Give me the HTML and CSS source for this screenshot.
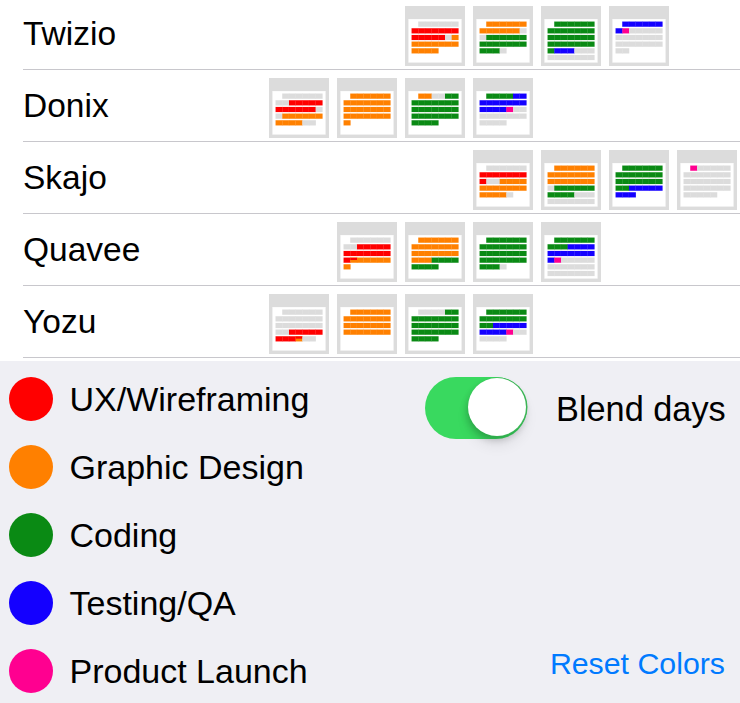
FILE: index.html

```html
<!DOCTYPE html>
<html lang="en">
<head>
  <meta charset="UTF-8" />
  <title>Projects</title>
  <link rel="stylesheet" href="styles.css">
</head>
<body>
  <div id="schedule">
    <div class="project">
      <div class="name">Twizio</div>
      <div class="weeks offset-3">
        <svg class="thumb" data-cells=".gggggg/rrrrrrr/rrrrrgo/ooooooo/oooo"></svg>
        <svg class="thumb" data-cells=".oooooo/oooooog/gGGGGGG/GGGGGGG/GGGg"></svg>
        <svg class="thumb" data-cells=".GGGGGG/GGGGGGG/GGGGGGG/GGGGGGG/Gbbbggg/ggggggg"></svg>
        <svg class="thumb" data-cells=".bbbbbb/bpggggg/ggggggg/ggggggg/gg"></svg>
      </div>
    </div>
    <div class="project">
      <div class="name">Donix</div>
      <div class="weeks">
        <svg class="thumb" data-cells=".gggggg/ggrrrrr/rrrrrrg/goooooo/oooogg"></svg>
        <svg class="thumb" data-cells=".oooooo/ooooooo/ooooooo/ooooooo/o"></svg>
        <svg class="thumb" data-cells=".ooggGG/GGGGGGG/GGGGGGG/GGGGGGG/GGGG"></svg>
        <svg class="thumb" data-cells=".GGGGbb/bbbbbbb/bbbbpgg/ggggggg/gggg"></svg>
      </div>
    </div>
    <div class="project">
      <div class="name">Skajo</div>
      <div class="weeks offset-4">
        <svg class="thumb" data-cells=".gggggg/rrrrrrr/rggoooo/ooooooo/oooog"></svg>
        <svg class="thumb" data-cells=".oooooo/ooooooo/ooooooo/gGGGGGG/GGGGggg/ggggggg"></svg>
        <svg class="thumb" data-cells=".GGGGGG/GGGGGGG/GGGGGGG/GGbbbbb/bbb"></svg>
        <svg class="thumb" data-cells=".pggggg/ggggggg/ggggggg/ggggggg/ggggg"></svg>
      </div>
    </div>
    <div class="project">
      <div class="name">Quavee</div>
      <div class="weeks offset-1">
        <svg class="thumb" data-cells=".gggggg/ggrrrrr/rrrrrrr/rmooooo/o"></svg>
        <svg class="thumb" data-cells=".oooooo/ooooooo/ooooooo/oooGGGG/GGGG"></svg>
        <svg class="thumb" data-cells=".GGGGGG/GGGGGGG/GGGGGGG/GGGGGGG/GGGg"></svg>
        <svg class="thumb" data-cells=".GGGGGG/GGGbbbb/bbbbbbb/bpggggg/ggggggg/ggggggg"></svg>
      </div>
    </div>
    <div class="project">
      <div class="name">Yozu</div>
      <div class="weeks">
        <svg class="thumb" data-cells=".gggggg/ggggggg/ggggggg/ggrrrrr/rrrmgg"></svg>
        <svg class="thumb" data-cells=".oooooo/ooooooo/ooooooo/ooooooo"></svg>
        <svg class="thumb" data-cells=".ggggGG/GGGGGGG/GGGGGGG/GGGGGGG/GGGG"></svg>
        <svg class="thumb" data-cells=".GGGGGG/GGGGGGG/GGbbbbb/bbbbpgg/gggg"></svg>
      </div>
    </div>
  </div>

  <div id="options">
    <ul class="legend">
      <li><span class="dot red"></span>UX/Wireframing</li>
      <li><span class="dot orange"></span>Graphic Design</li>
      <li><span class="dot green"></span>Coding</li>
      <li><span class="dot blue"></span>Testing/QA</li>
      <li><span class="dot pink"></span>Product Launch</li>
    </ul>
    <div class="settings">
      <div class="blend">
        <div class="switch"><div class="knob"></div></div>
        <span>Blend days</span>
      </div>
      <a class="reset">Reset Colors</a>
    </div>
  </div>

  <script src="thumbs.js"></script>
</body>
</html>
```

FILE: styles.css

```css
* {
  box-sizing: border-box;
}
html, body {
  height: 703px;
  overflow: hidden;
}
body {
  margin: 0;
  background-color: #fff;
  color: #000;
  font-family: "Liberation Sans", Arial, sans-serif;
  font-size: 34px;
}
#schedule {
  padding: 0 0 1px 23px;
}
.project {
  display: flex;
  height: 70px;
  margin-bottom: 2px;
  padding-top: 6px;
  border-bottom: 1px solid #c8c7cc;
}
.name {
  flex: 0 0 246px;
  height: 56px;
  line-height: 56px;
  font-size: 33.5px;
}
.weeks {
  display: flex;
  gap: 8px;
}
.offset-1 { margin-left: 68px; }
.offset-3 { margin-left: 136px; }
.offset-4 { margin-left: 204px; }
.thumb {
  display: block;
  width: 60px;
  height: 60px;
}
#options {
  display: flex;
  height: 342px;
  background-color: #efeff4;
}
.legend {
  flex: 0 0 425px;
  margin: 0;
  padding: 16px 0 0 9px;
  list-style: none;
}
.legend li {
  display: flex;
  align-items: center;
  gap: 16.5px;
  height: 44px;
  margin-bottom: 24px;
  line-height: 46px;
}
.dot {
  flex: none;
  width: 44px;
  height: 44px;
  border-radius: 50%;
}
.red { background-color: #ff0000; }
.orange { background-color: #ff8000; }
.green { background-color: #0a8a14; }
.blue { background-color: #1400ff; }
.pink { background-color: #ff0090; }
.settings {
  flex: 1;
  display: flex;
  flex-direction: column;
  justify-content: space-between;
  padding: 16px 14px 19px 0;
}
.blend {
  display: flex;
  align-items: center;
  gap: 29px;
  white-space: nowrap;
}
.switch {
  position: relative;
  flex: none;
  width: 102px;
  height: 62px;
  border-radius: 31px;
  background-color: #39d95f;
}
.knob {
  position: absolute;
  top: 1px;
  right: 1px;
  width: 58px;
  height: 58px;
  border-radius: 50%;
  background-color: #fff;
  box-shadow: 1px 0 0 0.5px #3cb556, -1px 4px 7px rgba(0, 0, 0, 0.2), 0 10px 14px rgba(0, 0, 0, 0.07);
}
.blend span {
  margin-top: 2px;
  font-size: 34.3px;
}
.reset {
  align-self: flex-end;
  margin-right: 1px;
  color: #007aff;
  font-size: 30.3px;
  line-height: 40px;
}
```

FILE: thumbs.js

```js
// draws the small week pictures from their data-cells string
const SVG_NS = "http://www.w3.org/2000/svg";
const FILLS = {
  g: "#dcdcdc",
  r: "#ff0000",
  o: "#ff8000",
  G: "#0a8a14",
  b: "#1400ff",
  p: "#ff0090"
};

function addRect(svg, x, y, w, h, fill, opacity) {
  const rect = document.createElementNS(SVG_NS, "rect");
  rect.setAttribute("x", x);
  rect.setAttribute("y", y);
  rect.setAttribute("width", w);
  rect.setAttribute("height", h);
  rect.setAttribute("fill", fill);
  if (opacity) rect.setAttribute("fill-opacity", opacity);
  svg.appendChild(rect);
}

document.querySelectorAll(".thumb").forEach((svg) => {
  svg.setAttribute("viewBox", "0 0 180 180");
  addRect(svg, 0, 0, 180, 180, "#dcdcdc");
  addRect(svg, 10, 39, 160, 131, "#f9f9f9");
  addRect(svg, 12, 41, 156, 127, "#fff");

  svg.dataset.cells.split("/").forEach((row, r) => {
    const y = 47 + r * 20;
    // pale edge first, so it stays round the bar and not between days
    row.split("").forEach((c, i) => {
      if (c === ".") return;
      const fill = c === "m" ? FILLS.o : FILLS[c];
      addRect(svg, 19 + i * 20, y - 1, 22, 17, fill, 0.25);
    });
    row.split("").forEach((c, i) => {
      if (c === ".") return;
      const x = 20 + i * 20;
      if (c === "m") {
        // a day that is shared by two tasks
        addRect(svg, x, y, 20.5, 15, FILLS.o);
        addRect(svg, x, y, 20.5, 7, FILLS.r);
      } else {
        addRect(svg, x, y, 20.5, 15, FILLS[c]);
      }
      // thin seam between two days of the same task
      if (row[i + 1] === c) addRect(svg, x + 19.5, y, 1, 15, "#fff", 0.3);
    });
  });
});
```
